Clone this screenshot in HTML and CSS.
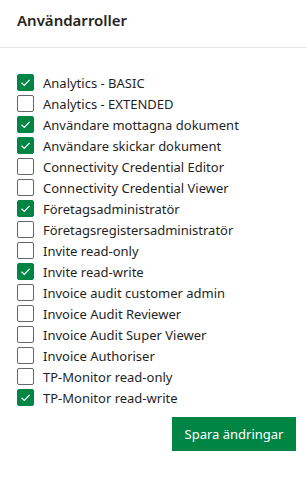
FILE: index.html
```html
<!DOCTYPE html>
<html lang="sv">
<head>
    <meta charset="UTF-8">
    <meta name="viewport" content="width=device-width, initial-scale=1.0">
    <title>Användarroller</title>
    <link rel="stylesheet" href="styles.css">
</head>
<body>

<div class="roles-panel">
    <div class="panel-header">
        <h2>Användarroller</h2>
    </div>
    <form class="roles-form">
        <ul class="role-list">
            <li class="role checked"><span class="box"><svg viewBox="0 0 17 17"><path d="M4.5 8.8 L7.3 11.4 L12.6 5.8"/></svg></span>Analytics - BASIC</li>
            <li class="role"><span class="box"></span>Analytics - EXTENDED</li>
            <li class="role checked"><span class="box"><svg viewBox="0 0 17 17"><path d="M4.5 8.8 L7.3 11.4 L12.6 5.8"/></svg></span>Användare mottagna dokument</li>
            <li class="role checked"><span class="box"><svg viewBox="0 0 17 17"><path d="M4.5 8.8 L7.3 11.4 L12.6 5.8"/></svg></span>Användare skickar dokument</li>
            <li class="role"><span class="box"></span>Connectivity Credential Editor</li>
            <li class="role"><span class="box"></span>Connectivity Credential Viewer</li>
            <li class="role checked"><span class="box"><svg viewBox="0 0 17 17"><path d="M4.5 8.8 L7.3 11.4 L12.6 5.8"/></svg></span>Företagsadministratör</li>
            <li class="role"><span class="box"></span>Företagsregistersadministratör</li>
            <li class="role"><span class="box"></span>Invite read-only</li>
            <li class="role checked"><span class="box"><svg viewBox="0 0 17 17"><path d="M4.5 8.8 L7.3 11.4 L12.6 5.8"/></svg></span>Invite read-write</li>
            <li class="role"><span class="box"></span>Invoice audit customer admin</li>
            <li class="role"><span class="box"></span>Invoice Audit Reviewer</li>
            <li class="role"><span class="box"></span>Invoice Audit Super Viewer</li>
            <li class="role"><span class="box"></span>Invoice Authoriser</li>
            <li class="role"><span class="box"></span>TP-Monitor read-only</li>
            <li class="role checked"><span class="box"><svg viewBox="0 0 17 17"><path d="M4.5 8.8 L7.3 11.4 L12.6 5.8"/></svg></span>TP-Monitor read-write</li>
        </ul>
        <div class="actions">
            <button type="submit">Spara ändringar</button>
        </div>
    </form>
</div>

</body>
</html>
```

FILE: styles.css
```css
body {
    margin: 0;
    font-family: "Noto Sans", "Open Sans", sans-serif;
    background: white;
    color: #1f1f1f;
}
.panel-header {
    height: 37px;
    padding: 10px 17px 0;
    border-bottom: 1px solid #e4e7ea;
}
.panel-header h2 {
    margin: 0;
    font-size: 15px;
    line-height: 20px;
    font-weight: 600;
    color: #242424;
}
.roles-form {
    padding: 24px 11px 0 17px;
}
.role-list {
    list-style: none;
    margin: 0;
    padding: 0;
}
.role {
    display: flex;
    align-items: center;
    gap: 9px;
    height: 21px;
    font-size: 13px;
}
.box {
    width: 15px;
    height: 15px;
    border: 1px solid #666;
    border-radius: 2px;
    flex-shrink: 0;
    display: flex;
}
.checked .box {
    background: #008545;
    border-color: #008545;
}
.box svg {
    width: 17px;
    height: 17px;
    margin: -1px;
    fill: none;
    stroke: white;
    stroke-width: 1.2;
}
.actions {
    display: flex;
    justify-content: flex-end;
    margin-top: 9px;
}
button {
    background: #008545;
    color: white;
    border: none;
    border-radius: 0;
    width: 124px;
    height: 34px;
    font-family: inherit;
    font-size: 13px;
    cursor: pointer;
}
```
